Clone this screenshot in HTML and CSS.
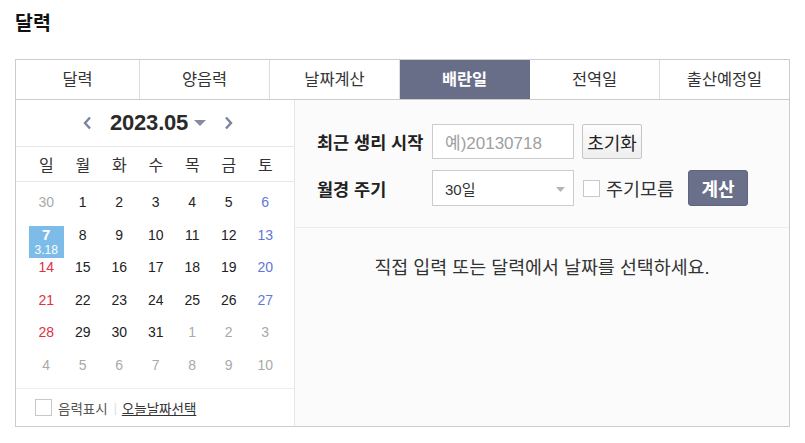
FILE: index.html
```html
<!DOCTYPE html>
<html lang="ko">
<head>
<meta charset="utf-8">
<title>달력</title>
<link rel="stylesheet" href="styles.css">
</head>
<body>
<div class="page">
  <h2 class="title">달력</h2>
  <div class="box">
    <div class="tabs">
      <div class="tab first">달력</div>
      <div class="tab">양음력</div>
      <div class="tab">날짜계산</div>
      <div class="tab active">배란일</div>
      <div class="tab">전역일</div>
      <div class="tab last">출산예정일</div>
    </div>
    <div class="content">
      <div class="cal">
        <div class="cal-head">
          <svg class="nav prev" width="9" height="14" viewBox="0 0 9 14"><path d="M7 1.5 L2 7 L7 12.5" fill="none" stroke="#7d82a0" stroke-width="2.4"/></svg>
          <span class="ym">2023.05</span>
          <svg class="drop" width="12" height="6" viewBox="0 0 12 6"><path d="M0 0 H12 L6 6 Z" fill="#858aa3"/></svg>
          <svg class="nav next" width="9" height="14" viewBox="0 0 9 14"><path d="M2 1.5 L7 7 L2 12.5" fill="none" stroke="#7d82a0" stroke-width="2.4"/></svg>
        </div>
        <div class="week">
          <span>일</span><span>월</span><span>화</span><span>수</span><span>목</span><span>금</span><span>토</span>
        </div>
        <div class="days">
          <span class="d other">30</span><span class="d">1</span><span class="d">2</span><span class="d">3</span><span class="d">4</span><span class="d">5</span><span class="d sat">6</span>
          <span class="d sel"><b>7</b><small>3.18</small></span><span class="d">8</span><span class="d">9</span><span class="d">10</span><span class="d">11</span><span class="d">12</span><span class="d sat">13</span>
          <span class="d sun">14</span><span class="d">15</span><span class="d">16</span><span class="d">17</span><span class="d">18</span><span class="d">19</span><span class="d sat">20</span>
          <span class="d sun">21</span><span class="d">22</span><span class="d">23</span><span class="d">24</span><span class="d">25</span><span class="d">26</span><span class="d sat">27</span>
          <span class="d sun">28</span><span class="d">29</span><span class="d">30</span><span class="d">31</span><span class="d other">1</span><span class="d other">2</span><span class="d other">3</span>
          <span class="d other">4</span><span class="d other">5</span><span class="d other">6</span><span class="d other">7</span><span class="d other">8</span><span class="d other">9</span><span class="d other">10</span>
        </div>
        <div class="cal-foot">
          <span class="chk"></span>
          <span class="lunar">음력표시</span>
          <span class="bar">|</span>
          <a class="today">오늘날짜선택</a>
        </div>
      </div>
      <div class="calc">
        <div class="form">
          <div class="row">
            <span class="label">최근 생리 시작</span>
            <div class="field input">예)20130718</div>
            <span class="btn reset">초기화</span>
          </div>
          <div class="row">
            <span class="label">월경 주기</span>
            <div class="field select">30일<svg class="sel-arrow" width="9" height="5" viewBox="0 0 9 5"><path d="M0 0 H9 L4.5 5 Z" fill="#b5b5b5"/></svg></div>
            <span class="chk small"></span>
            <span class="unknown">주기모름</span>
            <span class="btn go">계산</span>
          </div>
        </div>
        <p class="msg">직접 입력 또는 달력에서 날짜를 선택하세요.</p>
      </div>
    </div>
  </div>
</div>
</body>
</html>
```

FILE: styles.css
```css
* { box-sizing: border-box; }
html, body { margin: 0; padding: 0; background: #fff; }
body {
  font-family: "Liberation Sans", "Noto Sans CJK KR", sans-serif;
  color: #222;
}
.page { padding: 0 15px; }
.title {
  margin: 0;
  padding-top: 10px;
  height: 59px;
  font-size: 19.5px;
  line-height: 26px;
  font-weight: bold;
  color: #111;
}
.box {
  width: 775px;
  border: 1px solid #ccc;
}
.tabs {
  display: flex;
  height: 40px;
  border-bottom: 1px solid #ccc;
}
.tab {
  width: 130px;
  border-right: 1px solid #ddd;
  text-align: center;
  font-size: 16.4px;
  line-height: 39px;
  color: #333;
}
.tab.first { width: 124px; }
.tab.last { flex: 1; border-right: 0; }
.tab.active {
  background: #686d88;
  color: #fff;
  font-weight: bold;
  border-right-color: #686d88;
}
.content {
  display: flex;
  height: 326px;
}
.cal {
  width: 279px;
  border-right: 1px solid #e6e6e6;
  display: flex;
  flex-direction: column;
}
.cal-head {
  height: 47px;
  border-bottom: 1px solid #e6e6e6;
  display: flex;
  align-items: center;
  padding-left: 67px;
  padding-bottom: 1px;
}
.nav { display: block; }
.prev { margin-right: 18px; }
.ym {
  font-size: 22px;
  font-weight: bold;
  color: #2a2a2a;
  letter-spacing: -0.2px;
}
.drop { margin-left: 6px; margin-top: 1px; }
.next { margin-left: 18px; }
.week {
  height: 35px;
  border-bottom: 1px solid #e6e6e6;
  display: grid;
  grid-template-columns: repeat(7, 36.5px);
  padding-left: 12px;
  align-items: center;
}
.week span {
  text-align: center;
  font-size: 16px;
  color: #333;
}
.days {
  display: grid;
  grid-template-columns: repeat(7, 36.5px);
  grid-template-rows: repeat(6, 32.5px);
  padding: 11px 0 0 12px;
  height: 206px;
}
.d {
  text-align: center;
  font-size: 14px;
  line-height: 18px;
  color: #222;
}
.d.other { color: #a9a9a9; }
.d.sat { color: #5f77d6; }
.d.sun { color: #e2303e; }
.d.sel {
  background: #7dbce9;
  color: #fff;
  margin: 0 0.5px;
  display: flex;
  flex-direction: column;
  align-items: center;
}
.d.sel b { font-size: 15px; line-height: 18px; }
.d.sel small { font-size: 12px; line-height: 13px; }
.cal-foot {
  height: 38px;
  border-top: 1px solid #eee;
  display: flex;
  align-items: center;
  padding-left: 19px;
  font-size: 13.5px;
}
.chk {
  display: inline-block;
  width: 17px;
  height: 17px;
  border: 1px solid #c8c8c8;
  background: #fff;
  flex: none;
}
.lunar { color: #555; margin-left: 6px; }
.bar { color: #ddd; margin: 0 5px 0 6px; font-size: 12px; }
.today { color: #333; text-decoration: underline; }
.calc {
  flex: 1;
  background: #fbfbfb;
}
.form {
  height: 128px;
  border-bottom: 1px solid #ececec;
  padding: 24px 0 0 22px;
  display: flex;
  flex-direction: column;
  gap: 11px;
}
.row {
  display: flex;
  align-items: center;
}
.label {
  width: 115px;
  font-size: 17.5px;
  font-weight: bold;
  color: #222;
  white-space: nowrap;
}
.field {
  width: 142px;
  border: 1px solid #ccc;
  background: #fff;
  padding-left: 12px;
  display: flex;
  align-items: center;
}
.input { height: 35px; color: #a0a0a0; font-size: 17px; }
.select { height: 36px; color: #333; font-size: 15px; position: relative; }
.sel-arrow { position: absolute; right: 8px; top: 16px; }
.btn {
  width: 60px;
  height: 35px;
  border-radius: 2px;
  display: flex;
  align-items: center;
  justify-content: center;
  font-size: 18px;
}
.reset {
  margin-left: 8px;
  border: 1px solid #c6c6c6;
  background: linear-gradient(#fdfdfd, #eeeeee);
  color: #222;
}
.chk.small { margin-left: 9px; }
.unknown { margin-left: 6px; font-size: 18.5px; color: #333; }
.go {
  margin-left: 14px;
  height: 36px;
  background: #6a6f8a;
  border: 1px solid #5f6481;
  border-radius: 3px;
  color: #fff;
  font-weight: bold;
}
.msg {
  margin: 0;
  padding-top: 27px;
  text-align: center;
  font-size: 18.4px;
  line-height: 26px;
  color: #333;
}
```
